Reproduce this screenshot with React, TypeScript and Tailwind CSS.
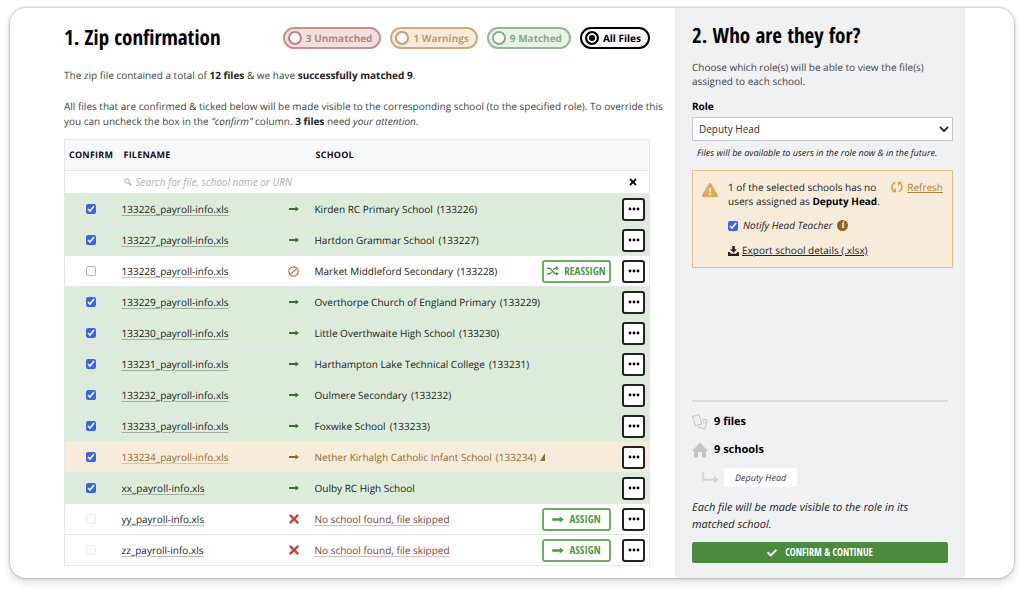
import { useState } from 'react';
import type { ReactNode } from 'react';
import { FaCheck, FaExclamationTriangle, FaTimes } from 'react-icons/fa';

type Status = 'matched' | 'warning' | 'excluded' | 'missing';

type FileRow = {
  file: string;
  school: string;
  urn?: string;
  status: Status;
};

const FILES: FileRow[] = [
  { file: '133226_payroll-info.xls', school: 'Kirden RC Primary School', urn: '133226', status: 'matched' },
  { file: '133227_payroll-info.xls', school: 'Hartdon Grammar School', urn: '133227', status: 'matched' },
  { file: '133228_payroll-info.xls', school: 'Market Middleford Secondary', urn: '133228', status: 'excluded' },
  { file: '133229_payroll-info.xls', school: 'Overthorpe Church of England Primary', urn: '133229', status: 'matched' },
  { file: '133230_payroll-info.xls', school: 'Little Overthwaite High School', urn: '133230', status: 'matched' },
  { file: '133231_payroll-info.xls', school: 'Harthampton Lake Technical College', urn: '133231', status: 'matched' },
  { file: '133232_payroll-info.xls', school: 'Oulmere Secondary', urn: '133232', status: 'matched' },
  { file: '133233_payroll-info.xls', school: 'Foxwike School', urn: '133233', status: 'matched' },
  { file: '133234_payroll-info.xls', school: 'Nether Kirhalgh Catholic Infant School', urn: '133234', status: 'warning' },
  { file: 'xx_payroll-info.xls', school: 'Oulby RC High School', status: 'matched' },
  { file: 'yy_payroll-info.xls', school: 'No school found, file skipped', status: 'missing' },
  { file: 'zz_payroll-info.xls', school: 'No school found, file skipped', status: 'missing' },
];

const FILTERS = [
  { id: 'unmatched', label: '3 Unmatched', style: 'border-[#c78f8d] bg-[#f3dfde] text-[#bb8483]' },
  { id: 'warnings', label: '1 Warnings', style: 'border-[#c9ab7e] bg-[#f8ebda] text-[#bd9f74]' },
  { id: 'matched', label: '9 Matched', style: 'border-[#9ab596] bg-[#e9f2e7] text-[#8fa88b]' },
  { id: 'all', label: 'All Files', style: 'border-black bg-[#fafafa] text-black' },
];

const ROW_STYLE: Record<Status, string> = {
  matched: 'bg-[#dcebda] text-[#222]',
  warning: 'bg-[#f7ebda] text-[#966a2b]',
  excluded: 'bg-white text-[#222]',
  missing: 'bg-white text-[#222]',
};

const CONDENSED = "font-['Open_Sans_Condensed','Noto_Sans_Condensed','Liberation_Sans_Narrow','Open_Sans',sans-serif]";

function ArrowIcon({ className }: { className: string }) {
  return (
    <svg viewBox="0 0 20 12" className={className} fill="currentColor" aria-hidden="true">
      <path d="M0 4h13V.8L20 6l-7 5.200V8H0z" />
    </svg>
  );
}

function BanIcon() {
  return (
    <svg viewBox="0 0 20 20" className="size-[11px] text-[#d0594e]" fill="none" stroke="currentColor" strokeWidth="2" aria-hidden="true">
      <circle cx="10" cy="10" r="8.5" />
      <path d="M4.2 15.8 15.8 4.2" />
    </svg>
  );
}

function ShuffleIcon() {
  return (
    <svg viewBox="0 0 24 20" className="h-[10px] w-[12px]" fill="none" stroke="currentColor" strokeWidth="2.8" aria-hidden="true">
      <path d="M0 4.5h4.500c5.500 0 7 11 12.500 11h2M0 15.500h4.500c2 0 3.500-1.500 4.500-3M12.500 7.500c1-1.700 2.500-3 4.500-3h2" />
      <path d="M18 .5 24 4.500l-6 4zM18 11.500l6 4-6 4z" fill="currentColor" stroke="none" />
    </svg>
  );
}

function SearchIcon() {
  return (
    <svg viewBox="0 0 16 16" className="size-2 text-[#aaa]" fill="none" stroke="currentColor" strokeWidth="2" aria-hidden="true">
      <circle cx="6" cy="6" r="4.500" />
      <path d="m9.500 9.500 5 5" strokeWidth="3" />
    </svg>
  );
}

function RefreshIcon() {
  return (
    <svg viewBox="0 0 22 22" className="size-[12px] text-[#e0983a]" fill="none" stroke="currentColor" strokeWidth="2.800" aria-hidden="true">
      <path d="M8 2.500C.5 5 .5 14 4.500 17.500M14 19.500C21.500 17 21.500 8 17.500 4.500" />
      <path d="M1.500 20.500H9V13zM20.500 1.500H13V9z" fill="currentColor" stroke="none" />
    </svg>
  );
}

function DownloadIcon() {
  return (
    <svg viewBox="0 0 22 20" className="h-[10px] w-[11px]" fill="currentColor" aria-hidden="true">
      <path d="M8.500 0h5v6.500H18l-7 7-7-7h4.500z" />
      <path d="M0 12h3l3 3.500h10L19 12h3v8H0z" />
    </svg>
  );
}

function FilesIcon() {
  return (
    <svg viewBox="0 0 34 34" className="size-4 text-[#c9cacb]" fill="none" stroke="currentColor" strokeWidth="2.500" strokeLinejoin="round" aria-hidden="true">
      <path d="M1.500 5 15 1.500l5.500 20L7 25z" />
      <path d="m21 10 11.500 3.500L27 32l-13-4 1-4" />
      <path d="m25 12-1 5 6 2" strokeWidth="1.500" />
    </svg>
  );
}

function HouseIcon() {
  return (
    <svg viewBox="0 0 32 32" className="size-4 text-[#c3c4c5]" fill="currentColor" aria-hidden="true">
      <path d="M16 1 32 18h-4v13h-8V20h-8v11H4V18H0z" />
    </svg>
  );
}

function BranchIcon() {
  return (
    <svg viewBox="0 0 34 24" className="h-[12px] w-[17px] text-[#d3d4d5]" aria-hidden="true">
      <path d="M2.500 1v14.500H26" fill="none" stroke="currentColor" strokeWidth="4" />
      <path d="m24 8 10 7.500L24 23z" fill="currentColor" />
    </svg>
  );
}

function StatusIcon({ status }: { status: Status }) {
  if (status === 'excluded') return <BanIcon />;
  if (status === 'missing') return <FaTimes className="size-[14px] text-[#c8453a]" />;
  if (status === 'warning') return <ArrowIcon className="h-[6px] w-[10px] text-[#9a651c]" />;
  return <ArrowIcon className="h-[6px] w-[10px] text-[#37702f]" />;
}

function ActionButton({ icon, children }: { icon: ReactNode; children: ReactNode }) {
  return (
    <button
      type="button"
      className={`flex h-[23px] w-[69px] items-center justify-center gap-[5px] rounded-[3px] border-2 border-[#6bb062] bg-white text-[11px] font-bold text-[#4e9a43] ${CONDENSED}`}
    >
      {icon}
      {children}
    </button>
  );
}

function FileTableRow({ row }: { row: FileRow }) {
  const [checked, setChecked] = useState(row.status === 'matched' || row.status === 'warning');
  const missing = row.status === 'missing';

  return (
    <tr className={`h-[31px] border-t border-[#e3e8e8] ${ROW_STYLE[row.status]}`}>
      <td>
        <input
          type="checkbox"
          aria-label={`Confirm ${row.file}`}
          checked={checked}
          disabled={missing}
          onChange={() => setChecked(!checked)}
          className={`mx-auto block size-[10px] accent-[#3a63f3] disabled:opacity-40 ${checked ? '' : 'opacity-60'}`}
        />
      </td>
      <td className="pl-[5px]">
        <a href="#file" className="underline decoration-current/30 underline-offset-2">{row.file}</a>
      </td>
      <td>
        <div className="flex justify-center">
          <StatusIcon status={row.status} />
        </div>
      </td>
      <td className="pl-[7px] whitespace-nowrap">
        {missing ? (
          <a href="#assign" className="text-[#85403d] underline decoration-[#dcbcbc] underline-offset-2">{row.school}</a>
        ) : (
          <span className="flex items-center gap-1">
            {row.school}
            {row.urn && <span>({row.urn})</span>}
            {row.status === 'warning' && (
              <svg viewBox="0 0 5 8" className="h-2 w-[5px] shrink-0" fill="currentColor" aria-hidden="true">
                <path d="M5 0v8H0z" />
              </svg>
            )}
          </span>
        )}
      </td>
      <td>
        <div className="flex items-center justify-end gap-[11px] pr-1">
          {row.status === 'excluded' && <ActionButton icon={<ShuffleIcon />}>REASSIGN</ActionButton>}
          {missing && <ActionButton icon={<ArrowIcon className="h-[7px] w-[12px]" />}>ASSIGN</ActionButton>}
          <button
            type="button"
            aria-label={`Options for ${row.file}`}
            className="flex h-[23px] w-[23px] items-center justify-center rounded-[3px] border-2 border-[#222] bg-white"
          >
            <svg viewBox="0 0 12 4" className="h-1 w-3" fill="black" aria-hidden="true">
              <circle cx="2" cy="2" r="1.400" />
              <circle cx="6" cy="2" r="1.400" />
              <circle cx="10" cy="2" r="1.400" />
            </svg>
          </button>
        </div>
      </td>
    </tr>
  );
}

function ZipConfirmation() {
  const [filter, setFilter] = useState('all');

  return (
    <main className="min-w-0 flex-1 pt-[14px] pr-[25px] pb-3 pl-[54px]">
      <div className="flex h-8 items-center justify-between">
        <h1 className={`text-[21px] leading-7 font-bold whitespace-nowrap text-black ${CONDENSED}`}>1. Zip confirmation</h1>
        <div className="flex gap-[9px]">
          {FILTERS.map((item) => (
            <label
              key={item.id}
              className={`flex h-[22px] items-center gap-1 rounded-full border-2 pr-[7px] pl-[3px] text-[10px] font-bold whitespace-nowrap ${item.style}`}
            >
              <input
                type="radio"
                name="filter"
                checked={filter === item.id}
                onChange={() => setFilter(item.id)}
                className="size-[14px] appearance-none rounded-full border-2 border-current bg-white checked:bg-black checked:shadow-[inset_0_0_0_2px_white]"
              />
              {item.label}
            </label>
          ))}
        </div>
      </div>

      <p className="mt-[14px] leading-[15px]">
        The zip file contained a total of <b className="text-[#222]">12 files</b> &amp; we have{' '}
        <b className="text-[#222]">successfully matched 9</b>.
      </p>
      <p className="mt-4 leading-[15px] whitespace-nowrap">
        <span className="block">
          All files that are confirmed &amp; ticked below will be made visible to the corresponding school (to the
          specified role). To override this
        </span>
        <span className="block">
          you can uncheck the box in the <i>“confirm”</i> column. <b className="text-[#222]">3 files</b> need{' '}
          <i>your attention</i>.
        </span>
      </p>

      <table className="mt-[10px] w-full table-fixed border-collapse border border-[#e3e8e8] text-left">
        <colgroup>
          <col className="w-[52px]" />
          <col className="w-[163px]" />
          <col className="w-[28px]" />
          <col className="w-[229px]" />
          <col />
        </colgroup>
        <thead>
          <tr className="h-[31px] bg-[#f8f9fb] text-[9px] tracking-wide text-[#111]">
            <th className="pl-1">CONFIRM</th>
            <th className="pl-[7px]">FILENAME</th>
            <th />
            <th className="pl-2">SCHOOL</th>
            <th />
          </tr>
          <tr className="h-[23px] border-t border-[#e3e8e8] font-normal">
            <td />
            <td colSpan={3} className="pl-[7px]">
              <label className="flex items-center gap-1">
                <SearchIcon />
                <input
                  type="search"
                  aria-label="Search files"
                  placeholder="Search for file, school name or URN"
                  className="flex-1 italic outline-none placeholder:text-[#b0b0b0]"
                />
              </label>
            </td>
            <td>
              <button type="button" aria-label="Clear search" className="mr-[11px] ml-auto block text-black">
                <FaTimes className="size-[10px]" />
              </button>
            </td>
          </tr>
        </thead>
        <tbody>
          {FILES.map((row) => (
            <FileTableRow key={row.file} row={row} />
          ))}
        </tbody>
      </table>
    </main>
  );
}

function NoUsersAlert() {
  return (
    <section className="mt-[10px] flex gap-[10px] border border-[#e8bf80] bg-[#f7ebda] p-[9px] text-[#222]">
      <FaExclamationTriangle className="mt-[2px] size-4 shrink-0 text-[#e2a655]" />
      <div className="flex-1">
        <div className="flex items-start justify-between">
          <p className="leading-[14px] whitespace-nowrap">
            1 of the selected schools has no
            <br />
            users assigned as <b className="text-black">Deputy Head</b>.
          </p>
          <a href="#refresh" className="flex items-center gap-1 leading-[14px] text-[#b5803a]">
            <RefreshIcon />
            <span className="underline">Refresh</span>
          </a>
        </div>
        <div className="mt-[10px] flex items-center gap-[5px]">
          <label className="flex items-center gap-[5px] leading-[15px] italic">
            <input type="checkbox" defaultChecked className="size-[10px] accent-[#3a63f3]" />
            Notify Head Teacher
          </label>
          <button
            type="button"
            aria-label="About notifications"
            className="flex size-[11px] items-center justify-center rounded-full bg-[#94601c] font-serif text-[9px] leading-none font-bold text-white italic"
          >
            i
          </button>
        </div>
        <a href="#export" className="mt-[10px] flex items-center gap-[3px] leading-[15px]">
          <DownloadIcon />
          <span className="underline">Export school details (.xlsx)</span>
        </a>
      </div>
    </section>
  );
}

function RolePanel() {
  return (
    <aside className="mr-[49px] flex w-[290px] shrink-0 flex-col bg-[#f0f1f3] pt-[14px] pr-[12px] pb-[15px] pl-[17px]">
      <h2 className={`text-[21px] leading-7 font-bold text-black ${CONDENSED}`}>2. Who are they for?</h2>
      <p className="mt-[10px] leading-[14px]">
        Choose which role(s) will be able to view the file(s)
        <br />
        assigned to each school.
      </p>

      <label htmlFor="role" className="mt-[11px] leading-[14px] font-bold text-black">Role</label>
      <select id="role" className="mt-1 h-6 w-full border border-[#c5c8d0] bg-white pl-[2px] text-[#333]">
        <option>Deputy Head</option>
      </select>
      <p className="mt-[5px] pl-[5px] text-[9px] leading-[14px] whitespace-nowrap text-[#222] italic">
        Files will be available to users in the role now &amp; in the future.
      </p>
      <NoUsersAlert />

      <div className="mt-auto mr-[5px] border-t-2 border-[#d8dadb] pt-3 text-[11px] text-black">
        <div className="flex h-4 items-center gap-[6px] font-bold">
          <FilesIcon />
          9 files
        </div>
        <div className="mt-3 flex h-4 items-center gap-[6px] font-bold">
          <HouseIcon />
          9 schools
        </div>
        <div className="mt-[10px] flex items-center gap-[5px] pl-[10px]">
          <BranchIcon />
          <span className="rounded-[3px] bg-white px-[11px] text-[9px] leading-[19px] text-[#333b45] italic">Deputy Head</span>
        </div>
        <p className="mt-3 leading-[17px] text-[#222] italic">
          Each file will be made visible to the role in its
          <br />
          matched school.
        </p>
        <button
          type="button"
          className={`mt-[9px] flex h-[21px] w-full items-center justify-center gap-2 rounded-[2px] bg-[#4b8a3f] text-[10px] font-bold text-white ${CONDENSED}`}
        >
          <FaCheck className="size-[10px]" />
          CONFIRM &amp; CONTINUE
        </button>
      </div>
    </aside>
  );
}

export default function App() {
  return (
    <div className="min-h-screen bg-white px-[10px] pt-2 pb-[14px] font-['Open_Sans','Noto_Sans',sans-serif] text-[10px] text-[#444] [text-rendering:geometricPrecision]">
      <div className="flex overflow-hidden rounded-2xl bg-white shadow-[0_0_2px_1px_rgba(0,0,0,0.18),0_4px_10px_rgba(0,0,0,0.15)]">
        <ZipConfirmation />
        <RolePanel />
      </div>
    </div>
  );
}
